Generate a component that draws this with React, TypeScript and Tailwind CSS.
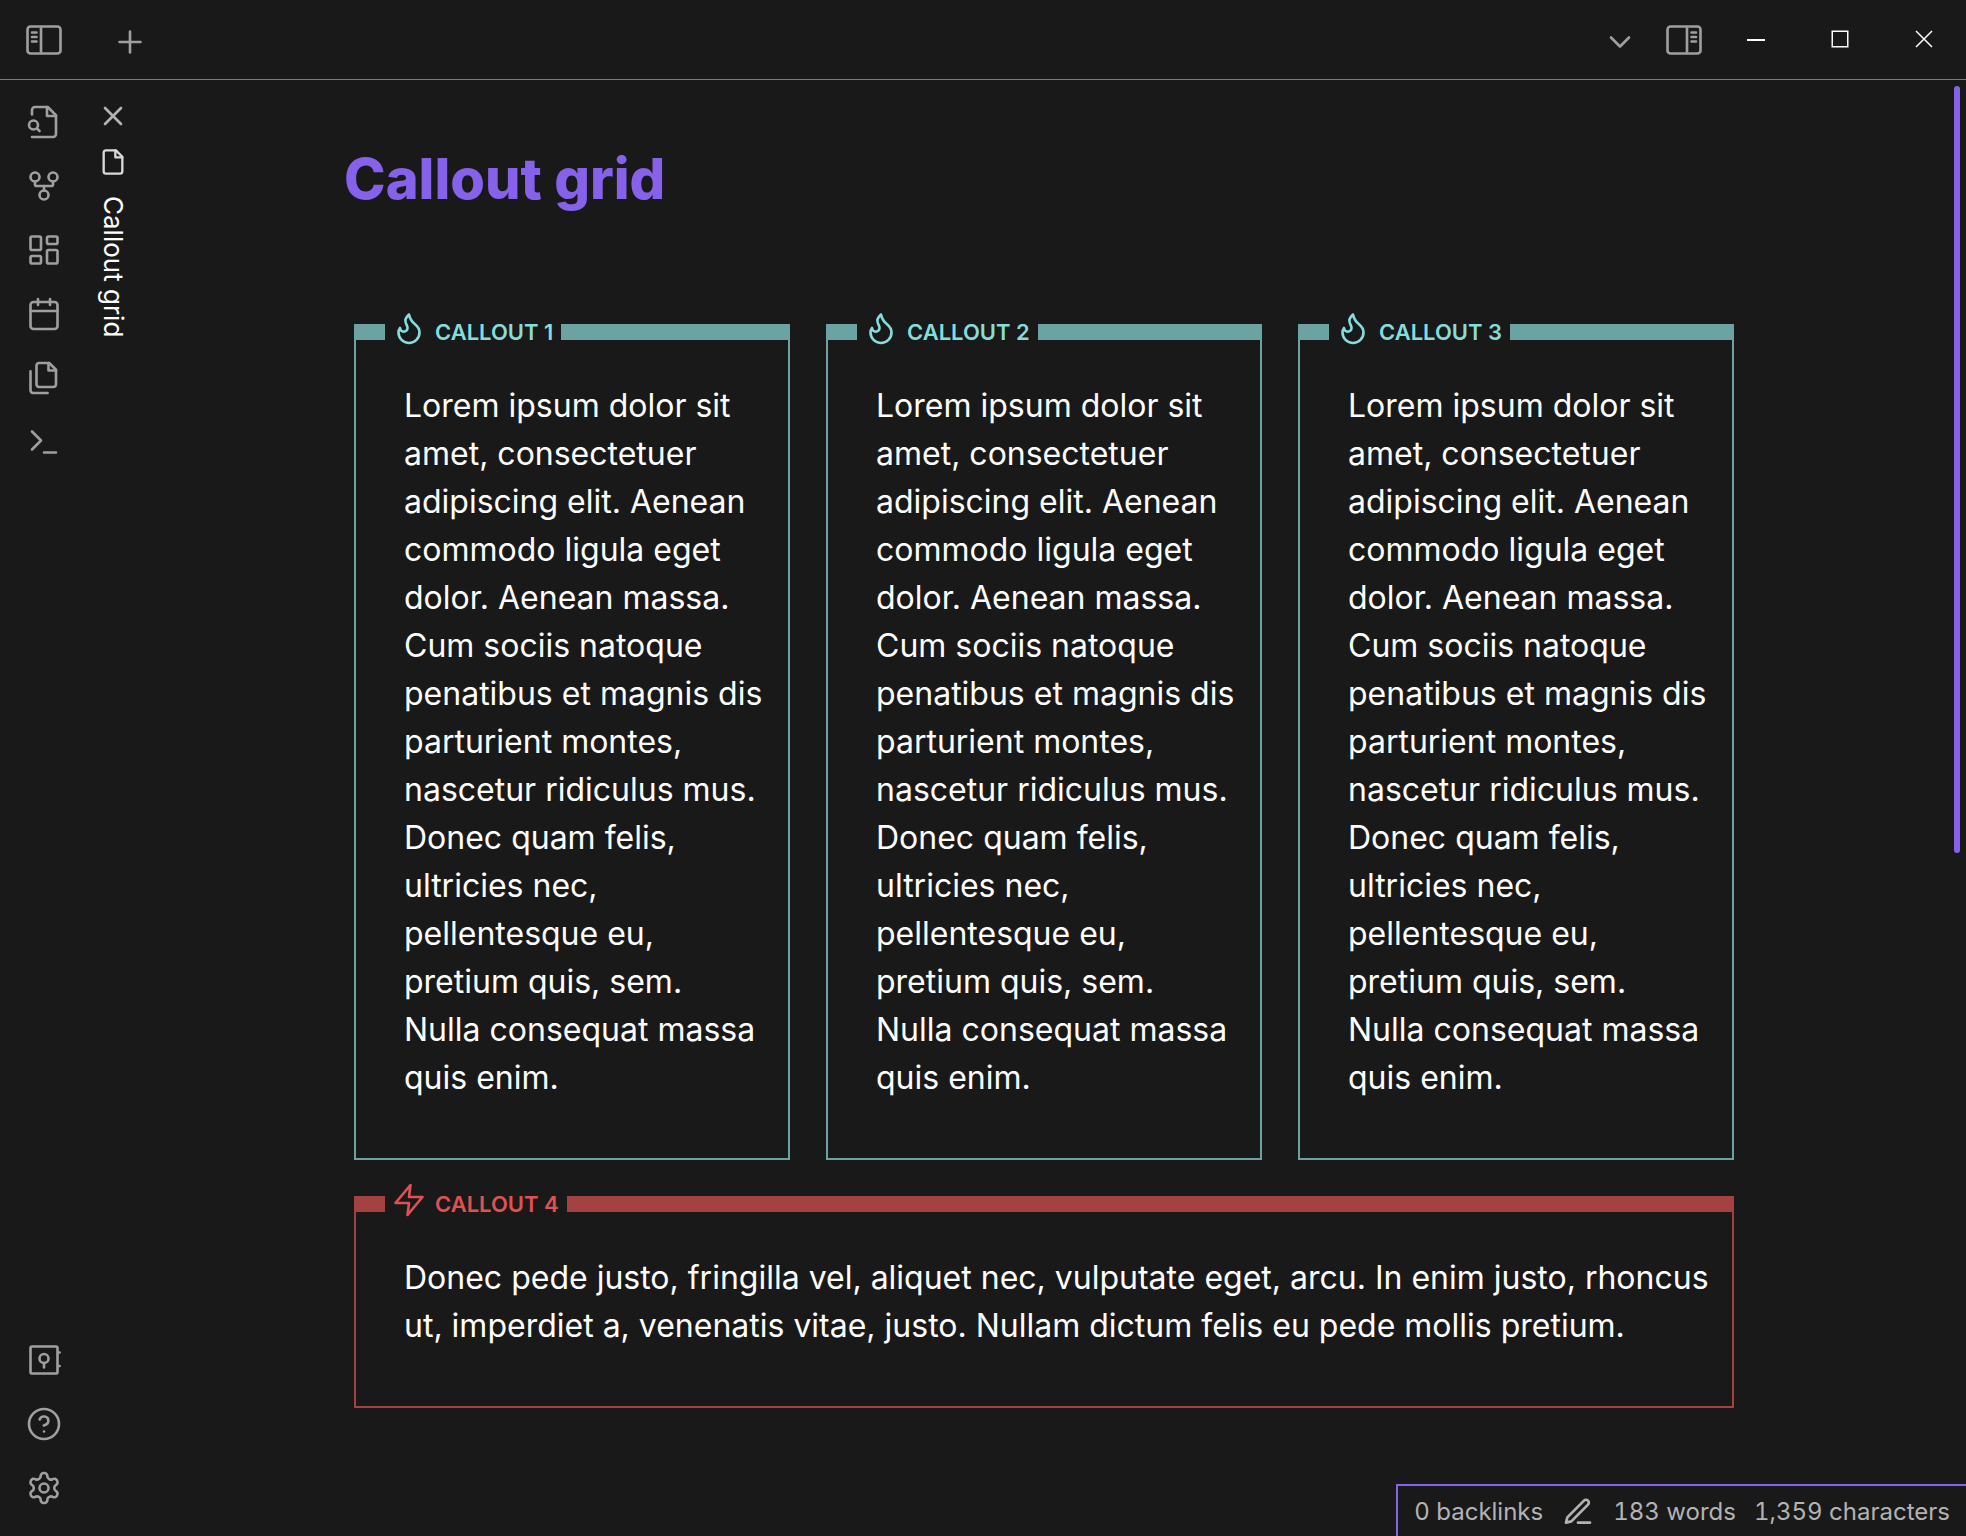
import type { ReactNode } from "react";

type IconProps = { children: ReactNode; className?: string };

function Icon({ children, className = "size-9 stroke-[1.75]" }: IconProps) {
  return (
    <svg
      viewBox="0 0 24 24"
      fill="none"
      stroke="currentColor"
      strokeLinecap="round"
      strokeLinejoin="round"
      aria-hidden="true"
      className={`shrink-0 ${className}`}
    >
      {children}
    </svg>
  );
}

const ribbonTop: { label: string; icon: ReactNode }[] = [
  {
    label: "Open quick switcher",
    icon: (
      <>
        <path d="M4 22h14a2 2 0 0 0 2-2V7.5L14.5 2H6a2 2 0 0 0-2 2v3" />
        <path d="M14 2v6h6" />
        <circle cx="5" cy="14" r="3" />
        <path d="m9 18-1.5-1.5" />
      </>
    ),
  },
  {
    label: "Open graph view",
    icon: (
      <>
        <circle cx="12" cy="18" r="3" />
        <circle cx="6" cy="6" r="3" />
        <circle cx="18" cy="6" r="3" />
        <path d="M18 9v2c0 .6-.4 1-1 1H7c-.6 0-1-.4-1-1V9" />
        <path d="M12 12v3" />
      </>
    ),
  },
  {
    label: "Create new canvas",
    icon: (
      <>
        <rect x="3" y="3" width="7" height="9" rx="1" />
        <rect x="14" y="3" width="7" height="5" rx="1" />
        <rect x="14" y="12" width="7" height="9" rx="1" />
        <rect x="3" y="16" width="7" height="5" rx="1" />
      </>
    ),
  },
  {
    label: "Open today's daily note",
    icon: (
      <>
        <rect x="3" y="4" width="18" height="18" rx="2" />
        <path d="M16 2v4M8 2v4M3 10h18" />
      </>
    ),
  },
  {
    label: "Insert template",
    icon: (
      <>
        <path d="M15.5 2H8.6c-.4 0-.8.2-1.1.5-.3.3-.5.7-.5 1.1v12.8c0 .4.2.8.5 1.1.3.3.7.5 1.1.5h9.8c.4 0 .8-.2 1.1-.5.3-.3.5-.7.5-1.1V6.5L15.5 2z" />
        <path d="M3 7.6v12.8c0 .4.2.8.5 1.1.3.3.7.5 1.1.5h9.8" />
        <path d="M15 2v5h5" />
      </>
    ),
  },
  {
    label: "Open command palette",
    icon: <path d="m4 17 6-6-6-6M12 19h8" />,
  },
];

const ribbonBottom: { label: string; icon: ReactNode }[] = [
  {
    label: "Open another vault",
    icon: (
      <>
        <rect x="3" y="3" width="18" height="18" rx="1" />
        <circle cx="12" cy="11" r="3" />
        <path d="M12 14v3M21.5 7h.9M21.5 16h.9" />
      </>
    ),
  },
  {
    label: "Help",
    icon: (
      <>
        <circle cx="12" cy="12" r="10" />
        <path d="M9.09 9a3 3 0 0 1 5.83 1c0 2-3 3-3 3M12 17h.01" />
      </>
    ),
  },
  {
    label: "Settings",
    icon: (
      <>
        <path d="M12.22 2h-.44a2 2 0 0 0-2 2v.18a2 2 0 0 1-1 1.73l-.43.25a2 2 0 0 1-2 0l-.15-.08a2 2 0 0 0-2.73.73l-.22.38a2 2 0 0 0 .73 2.73l.15.1a2 2 0 0 1 1 1.72v.51a2 2 0 0 1-1 1.74l-.15.09a2 2 0 0 0-.73 2.73l.22.38a2 2 0 0 0 2.73.73l.15-.08a2 2 0 0 1 2 0l.43.25a2 2 0 0 1 1 1.73V20a2 2 0 0 0 2 2h.44a2 2 0 0 0 2-2v-.18a2 2 0 0 1 1-1.73l.43-.25a2 2 0 0 1 2 0l.15.08a2 2 0 0 0 2.73-.73l.22-.39a2 2 0 0 0-.73-2.73l-.15-.08a2 2 0 0 1-1-1.74v-.5a2 2 0 0 1 1-1.74l.15-.09a2 2 0 0 0 .73-2.73l-.22-.38a2 2 0 0 0-2.73-.73l-.15.08a2 2 0 0 1-2 0l-.43-.25a2 2 0 0 1-1-1.73V4a2 2 0 0 0-2-2z" />
        <circle cx="12" cy="12" r="3" />
      </>
    ),
  },
];

function RibbonButton({ label, icon }: { label: string; icon: ReactNode }) {
  return (
    <button type="button" aria-label={label} className="flex h-16 w-full items-center justify-center">
      <Icon>{icon}</Icon>
    </button>
  );
}

const flame = (
  <path d="M8.5 14.5A2.5 2.5 0 0 0 11 12c0-1.38-.5-2-1-3-1.072-2.143-.224-4.054 2-6 .5 2.5 2 4.9 4 6.5 2 1.6 3 3.5 3 5.5a7 7 0 1 1-14 0c0-1.153.433-2.294 1-3a2.5 2.5 0 0 0 2.5 2.5z" />
);
const zap = <path d="M13 2 3 14h9l-1 8 10-12h-9l1-8z" />;

const lorem =
  "Lorem ipsum dolor sit amet, consectetuer adipiscing elit. Aenean commodo ligula eget dolor. Aenean massa. Cum sociis natoque penatibus et magnis dis parturient montes, nascetur ridiculus mus. Donec quam felis, ultricies nec, pellentesque eu, pretium quis, sem. Nulla consequat massa quis enim.";
const donec =
  "Donec pede justo, fringilla vel, aliquet nec, vulputate eget, arcu. In enim justo, rhoncus ut, imperdiet a, venenatis vitae, justo. Nullam dictum felis eu pede mollis pretium.";

const callouts = [
  { title: "CALLOUT 1", body: lorem, icon: flame, frame: "border-[#6aa3a2]", head: "text-[#83dddc]" },
  { title: "CALLOUT 2", body: lorem, icon: flame, frame: "border-[#6aa3a2]", head: "text-[#83dddc]" },
  { title: "CALLOUT 3", body: lorem, icon: flame, frame: "border-[#6aa3a2]", head: "text-[#83dddc]" },
  { title: "CALLOUT 4", body: donec, icon: zap, frame: "col-span-3 border-[#a44241]", head: "text-[#e05252]" },
];

export default function App() {
  return (
    <div className="relative flex h-screen flex-col overflow-hidden bg-[#191919] font-['Inter',sans-serif] text-[#9f9f9f]">
      <header className="flex h-20 shrink-0 items-center border-b border-[#8662eb]">
        <button type="button" aria-label="Collapse left sidebar" className="flex w-22 justify-center">
          <Icon>
            <rect x="1" y="3" width="22" height="18" rx="2" />
            <path d="M10 4v16M4 7h3M4 10h3M4 13h3" />
          </Icon>
        </button>
        <div className="flex flex-1 justify-between pt-1 pl-6">
          <button type="button" aria-label="New tab">
            <Icon>
              <path d="M5 12h14M12 5v14" />
            </Icon>
          </button>
          <button type="button" aria-label="Tab list">
            <Icon>
              <path d="m6 9 6 6 6-6" />
            </Icon>
          </button>
        </div>
        <button type="button" aria-label="Expand right sidebar" className="mr-3 ml-7">
          <Icon>
            <rect x="1" y="3" width="22" height="18" rx="2" />
            <path d="M14 4v16M17 7h3M17 10h3M17 13h3" />
          </Icon>
        </button>
        <div className="flex pb-0.5 text-white">
          <button type="button" aria-label="Minimize" className="flex w-21 justify-center">
            <svg viewBox="0 0 18 18" className="size-4.5" fill="none" stroke="currentColor" strokeWidth="2">
              <path d="M0 10h18" />
            </svg>
          </button>
          <button type="button" aria-label="Maximize" className="flex w-21 justify-center">
            <svg viewBox="0 0 18 18" className="size-4.5" fill="none" stroke="currentColor" strokeWidth="1.5">
              <path d="M1.25 1.25h15.5v15.5H1.25z" />
            </svg>
          </button>
          <button type="button" aria-label="Close window" className="flex w-21 justify-center">
            <svg viewBox="0 0 18 18" className="size-4.5" fill="none" stroke="currentColor" strokeWidth="1.5">
              <path d="m1 1 16 16M17 1 1 17" />
            </svg>
          </button>
        </div>
      </header>

      <div className="flex min-h-0 flex-1">
        <nav aria-label="Ribbon" className="flex w-22 shrink-0 flex-col justify-between pt-2.5 pb-4">
          <div>
            {ribbonTop.map((item) => (
              <RibbonButton key={item.label} {...item} />
            ))}
          </div>
          <div>
            {ribbonBottom.map((item) => (
              <RibbonButton key={item.label} {...item} />
            ))}
          </div>
        </nav>

        <aside className="flex w-[50px] shrink-0 flex-col items-center pt-5">
          <button type="button" aria-label="Close tab" className="text-[#b3b3b3]">
            <Icon className="size-8 stroke-2">
              <path d="M18 6 6 18M6 6l12 12" />
            </Icon>
          </button>
          <div className="flex flex-col items-center gap-5 pt-4 text-[#dadada]">
            <Icon className="size-7 stroke-2">
              <path d="M14.5 2H6a2 2 0 0 0-2 2v16a2 2 0 0 0 2 2h12a2 2 0 0 0 2-2V7.5L14.5 2z" />
              <path d="M14 2v6h6" />
            </Icon>
            <span className="text-[26px] leading-8 text-white [writing-mode:vertical-rl]">Callout grid</span>
          </div>
        </aside>

        <main className="min-w-0 flex-1 px-8">
          <article className="mx-auto max-w-[1400px] pt-16">
            <h1 className="text-[56px] leading-[70px] font-extrabold text-[#8662eb]">Callout grid</h1>
            <div className="mt-[110px] grid grid-cols-3 gap-9 px-2.5">
              {callouts.map((c) => (
                <section key={c.title} className={`border-2 border-t-16 ${c.frame}`}>
                  <h2
                    className={`-mt-[30px] ml-[29px] flex w-fit items-start gap-2 bg-[#191919] pr-2 pl-1.5 text-[22px] leading-11 font-semibold ${c.head}`}
                  >
                    <Icon>{c.icon}</Icon>
                    {c.title}
                  </h2>
                  <p className="pt-7 pr-[22px] pb-14 pl-12 text-[32px] leading-12 text-white">{c.body}</p>
                </section>
              ))}
            </div>
          </article>
        </main>
        <div className="w-4 shrink-0 pt-1.5 pl-1">
          <div className="h-[767px] w-1.5 rounded-full bg-[#8662eb]" />
        </div>
      </div>

      <footer className="absolute right-0 bottom-0 flex h-13 items-center gap-[18px] border-t-2 border-l-2 border-[#8662eb] bg-[#191919] px-4 pt-0.5 text-2xl text-[#b3b3b3] tabular-nums">
        <span>0 backlinks</span>
        <button type="button" aria-label="Editing mode" className="px-px">
          <Icon className="size-8 stroke-2">
            <path d="M12 20h9M16.5 3.5a2.12 2.12 0 0 1 3 3L7 19l-4 1 1-4Z" />
          </Icon>
        </button>
        <span>183 words</span>
        <span>1,359 characters</span>
      </footer>
    </div>
  );
}
